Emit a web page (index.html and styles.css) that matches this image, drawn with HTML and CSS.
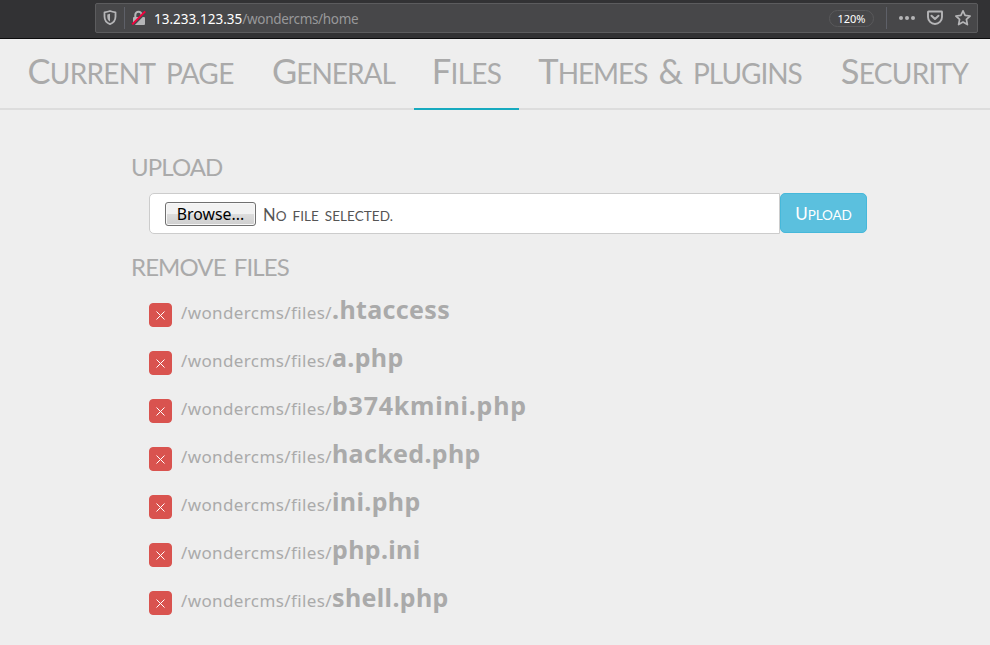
FILE: index.html
```html
<!DOCTYPE html>
<html lang="en">
<head>
<meta charset="utf-8">
<title>Files</title>
<link rel="stylesheet" href="styles.css">
</head>
<body>
<header class="browser">
  <div class="address">
    <svg class="shield" width="14" height="16" viewBox="0 0 14 16"><path d="M1.500 2.300Q4.500 2 7 1Q9.500 2 12.500 2.300V6.500C12.500 10.500 10.200 12.900 7 14.200C3.800 12.900 1.500 10.500 1.500 6.500Z" fill="none" stroke="#b5b5b7" stroke-width="1.800" stroke-linejoin="round"/><path d="M7 3.800V11.500C5 10.400 4.300 8.900 4.300 6.700V4.500Z" fill="#b5b5b7"/></svg>
    <i class="divider"></i>
    <svg class="lock" width="16" height="16" viewBox="0 0 16 16"><path d="M4.300 8V5A3.200 3.200 0 0 1 10.700 5V8" fill="none" stroke="#b5b5b7" stroke-width="2"/><rect x="2" y="7" width="12" height="8" rx="1" fill="#b5b5b7"/><path d="M2.400 15L15 2.400" stroke="#48484a" stroke-width="2"/><path d="M1.200 14.400L14.200 1.400" stroke="#f5003d" stroke-width="2"/></svg>
    <span class="url"><b>13.233.123.35</b>/wondercms/home</span>
    <span class="zoom">120%</span>
    <i class="divider"></i>
    <svg class="dots" width="18" height="6" viewBox="0 0 18 6"><g fill="#b5b5b7"><circle cx="3" cy="3" r="2"/><circle cx="9" cy="3" r="2"/><circle cx="15" cy="3" r="2"/></g></svg>
    <svg class="pocket" width="18" height="16" viewBox="0 0 18 16"><path d="M2.500 1.500H15.500Q16 1.500 16 2V7A7 7 0 0 1 2 7V2Q2 1.500 2.500 1.500Z" fill="none" stroke="#b5b5b7" stroke-width="1.900"/><path d="M5.500 5.700L9 9L12.500 5.700" fill="none" stroke="#b5b5b7" stroke-width="2" stroke-linecap="round" stroke-linejoin="round"/></svg>
    <svg class="star" width="18" height="18" viewBox="0 0 18 18"><path d="M9 1.800L11.100 6.400L16.100 7L12.400 10.400L13.400 15.600L9 13.100L4.600 15.600L5.600 10.400L1.900 7L6.900 6.400Z" fill="none" stroke="#b5b5b7" stroke-width="1.700" stroke-linejoin="round"/></svg>
  </div>
</header>
<nav class="tabs">
  <a class="tab current"><span class="caps">Current page</span></a>
  <a class="tab general"><span class="caps">General</span></a>
  <a class="tab files active"><span class="caps">Files</span></a>
  <a class="tab themes"><span class="caps">Themes <span class="big">&amp;</span> plugins</span></a>
  <a class="tab security"><span class="caps">Security</span></a>
</nav>
<main>
  <h2>UPLOAD</h2>
  <div class="upload">
    <div class="field"><button class="browse">Browse...</button><span class="caps none">No file selected.</span></div>
    <button class="submit"><span class="caps">Upload</span></button>
  </div>
  <h2>REMOVE FILES</h2>
  <ul>
    <li><button class="remove"><svg width="9" height="9" viewBox="0 0 9 9"><path d="M.5 .5L8.500 8.500M8.500 .5L.5 8.500"/></svg></button><span class="path">/wondercms/files/</span><b>.htaccess</b></li>
    <li><button class="remove"><svg width="9" height="9" viewBox="0 0 9 9"><path d="M.5 .5L8.500 8.500M8.500 .5L.5 8.500"/></svg></button><span class="path">/wondercms/files/</span><b>a.php</b></li>
    <li><button class="remove"><svg width="9" height="9" viewBox="0 0 9 9"><path d="M.5 .5L8.500 8.500M8.500 .5L.5 8.500"/></svg></button><span class="path">/wondercms/files/</span><b class="wide">b374kmini.php</b></li>
    <li><button class="remove"><svg width="9" height="9" viewBox="0 0 9 9"><path d="M.5 .5L8.500 8.500M8.500 .5L.5 8.500"/></svg></button><span class="path">/wondercms/files/</span><b>hacked.php</b></li>
    <li><button class="remove"><svg width="9" height="9" viewBox="0 0 9 9"><path d="M.5 .5L8.500 8.500M8.500 .5L.5 8.500"/></svg></button><span class="path">/wondercms/files/</span><b>ini.php</b></li>
    <li><button class="remove"><svg width="9" height="9" viewBox="0 0 9 9"><path d="M.5 .5L8.500 8.500M8.500 .5L.5 8.500"/></svg></button><span class="path">/wondercms/files/</span><b>php.ini</b></li>
    <li><button class="remove"><svg width="9" height="9" viewBox="0 0 9 9"><path d="M.5 .5L8.500 8.500M8.500 .5L.5 8.500"/></svg></button><span class="path">/wondercms/files/</span><b>shell.php</b></li>
  </ul>
</main>
</body>
</html>
```
FILE: styles.css
```css
* { box-sizing: border-box; }
body { margin: 0; height: 645px; overflow: hidden; background: #eee; color: #aaa; font-family: "Noto Sans", sans-serif; }
button { font: inherit; margin: 0; padding: 0; }
.browser { height: 39px; padding: 3px 12px 0 95px; background: #323234; border-bottom: 1px solid #0c0c0d; }
.address { display: flex; align-items: center; height: 30px; padding: 0 5px 0 8px; background: #474749; border: 1px solid #5c5c5e; border-radius: 2px; }
.address svg { flex: none; display: block; }
.divider { width: 1px; height: 22px; background: #5e6068; }
.shield { margin: 0 7px 0 -1px; }
.lock { margin: 0 7px 0 6px; }
.url { margin-top: 2px; font-size: 13.5px; line-height: 20px; color: #98989a; flex: 1; letter-spacing: -.32px; }
.url b { font-weight: 400; color: #fff; letter-spacing: .02px; }
.zoom { width: 45px; height: 17px; border: 1px solid #59595b; border-radius: 9px; color: #fff; font-size: 11px; line-height: 15px; text-align: center; margin-right: 12px; }
.dots { margin: 0 10px 0 11px; }
.pocket { margin-right: 10px; }
.tabs { display: flex; height: 71px; padding-left: 8px; border-bottom: 2px solid #ddd; }
.tab { flex: none; height: 71px; display: flex; justify-content: center; white-space: nowrap; font-family: Lato, sans-serif; }
.active { border-bottom: 2px solid #17aabf; }
.caps { display: inline-block; text-transform: uppercase; white-space: nowrap; }
.tab .caps { font-size: 28px; line-height: 68px; letter-spacing: -.7px; word-spacing: 5px; }
.tab .caps::first-letter, .big { font-size: 34.5px; line-height: 40px; }
.current { width: 245px; }
.general { width: 161px; }
.tab.general .caps { letter-spacing: -1px; }
.files { width: 105px; }
.themes { width: 302px; }
.tab.themes .caps { letter-spacing: -1.05px; }
.security { width: 167px; }
main { padding: 42px 123px 0 131px; }
h2 { margin: 0; font-family: Lato, sans-serif; font-weight: 400; font-size: 24px; line-height: 30px; letter-spacing: -.9px; word-spacing: 3px; }
.upload { display: flex; margin: 11px 0 18px 18px; height: 41px; }
.field { width: 631px; height: 41px; background: #fff; border: 1px solid #ccc; border-radius: 5px 0 0 5px; padding-left: 15px; display: flex; align-items: center; }
.browse { width: 91px; height: 24px; border: 1px solid #707070; border-radius: 3px; background: linear-gradient(#f2f2f2 0 48%, #dddddd 50%, #cfcfcf); box-shadow: inset 0 0 0 1px #f8f8f8; color: #000; font-size: 15.8px; line-height: 22px; }
.none { margin: 2px 0 0 7px; color: #555; font-family: Lato, sans-serif; font-size: 13.5px; letter-spacing: .05px; word-spacing: 2.5px; }
.none::first-letter { font-size: 16.5px; }
.submit { width: 87px; height: 40px; border: 1px solid #46b8da; border-radius: 5px; background: #5bc0de; color: #fff; font-family: Lato, sans-serif; }
.submit .caps { font-size: 13.5px; letter-spacing: -.1px; }
.submit .caps::first-letter { font-size: 17px; }
ul { list-style: none; margin: 8px 0 0 18px; padding: 0; }
li { height: 48px; display: flex; align-items: baseline; line-height: 38px; white-space: nowrap; }
.remove { align-self: flex-start; flex: none; width: 23px; height: 24px; margin: 13px 9px 0 0; border: 1px solid #d9534f; border-radius: 4px; background: #d9534f; display: grid; place-items: center; }
.remove svg { display: block; margin-top: 1px; stroke: #fff; stroke-width: 1; fill: none; }
.path { width: 151px; font-size: 17px; letter-spacing: .38px; }
li b { font-weight: 700; font-size: 25px; letter-spacing: .35px; }
li .wide { letter-spacing: .78px; }
```
